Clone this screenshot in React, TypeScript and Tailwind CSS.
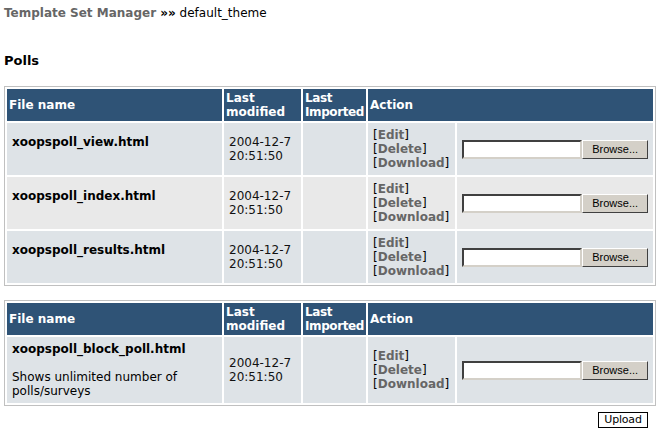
import React from 'react';

type Tpl = { file: string; desc?: string; odd?: boolean };

const setOne: Tpl[] = [
  { file: 'xoopspoll_view.html' },
  { file: 'xoopspoll_index.html', odd: true },
  { file: 'xoopspoll_results.html' },
];

const setTwo: Tpl[] = [
  { file: 'xoopspoll_block_poll.html', desc: 'Shows unlimited number of polls/surveys' },
];

function FileField() {
  return (
    <div className="flex items-stretch h-[19px]">
      <div className="w-[121px] bg-white border-2 border-t-[#404040] border-l-[#404040] border-b-[#d4d0c8] border-r-[#d4d0c8]" />
      <div className="w-[66px] flex items-center justify-center bg-[#d4d0c8] border border-t-white border-l-white border-b-[#404040] border-r-[#404040] text-[11px] text-black font-['Liberation_Sans',Arial,sans-serif]">
        Browse...
      </div>
    </div>
  );
}

function TemplateTable({ rows }: { rows: Tpl[] }) {
  return (
    <table className="w-full table-fixed border-separate border-spacing-[2px] border border-[#c0c0c0]">
      <colgroup>
        <col className="w-[215px]" />
        <col className="w-[77px]" />
        <col className="w-[63px]" />
        <col className="w-[87px]" />
        <col />
      </colgroup>
      <thead>
        <tr className="h-[32px]">
          <th className="bg-[#2f5376] text-white font-bold text-left align-middle px-[2px]">File name</th>
          <th className="bg-[#2f5376] text-white font-bold text-left align-middle px-[2px]">Last modified</th>
          <th className="bg-[#2f5376] text-white font-bold text-left align-middle px-[2px] whitespace-nowrap tracking-[-0.4px]">
            Last
            <br />
            Imported
          </th>
          <th colSpan={2} className="bg-[#2f5376] text-white font-bold text-left align-middle px-[2px]">
            Action
          </th>
        </tr>
      </thead>
      <tbody>
        {rows.map((r) => {
          const bg = r.odd ? 'bg-[#e9e9e9]' : 'bg-[#dee3e7]';
          return (
            <tr key={r.file}>
              <td className={`${bg} p-[5px] align-middle text-black`}>
                <b>{r.file}</b>
                <br />
                <br />
                {r.desc}
              </td>
              <td className={`${bg} p-[5px] align-middle text-[#111]`}>2004-12-7 20:51:50</td>
              <td className={`${bg} p-[5px] align-middle`}></td>
              <td className={`${bg} p-[5px] align-middle text-black whitespace-nowrap`}>
                [<span className="font-bold text-[#666]">Edit</span>]
                <br />[<span className="font-bold text-[#666]">Delete</span>]
                <br />[<span className="font-bold text-[#666]">Download</span>]
              </td>
              <td className={`${bg} p-[5px] align-middle`}>
                <FileField />
              </td>
            </tr>
          );
        })}
      </tbody>
    </table>
  );
}

export default function App() {
  return (
    <div className="min-h-[431px] bg-white px-[4px] pr-[5px] pt-[6px] text-[12px] leading-[14px] text-black font-['DejaVu_Sans',Verdana,sans-serif]">
      <div className="h-[14px] whitespace-nowrap">
        <span className="font-bold text-[#666]">Template Set Manager</span>
        <span className="font-bold"> »»</span> default_theme
      </div>
      <h4 className="mt-[33px] h-[16px] text-[13px] leading-[16px] font-bold">Polls</h4>
      <div className="mt-[17px]">
        <TemplateTable rows={setOne} />
      </div>
      <div className="mt-[14px]">
        <TemplateTable rows={setTwo} />
      </div>
      <div className="flex justify-end mt-[6px] pr-[8px]">
        <div className="w-[50px] h-[16px] flex items-center justify-center bg-white border border-black text-[11px] leading-[14px] tracking-[-0.2px] text-black">
          Upload
        </div>
      </div>
    </div>
  );
}
